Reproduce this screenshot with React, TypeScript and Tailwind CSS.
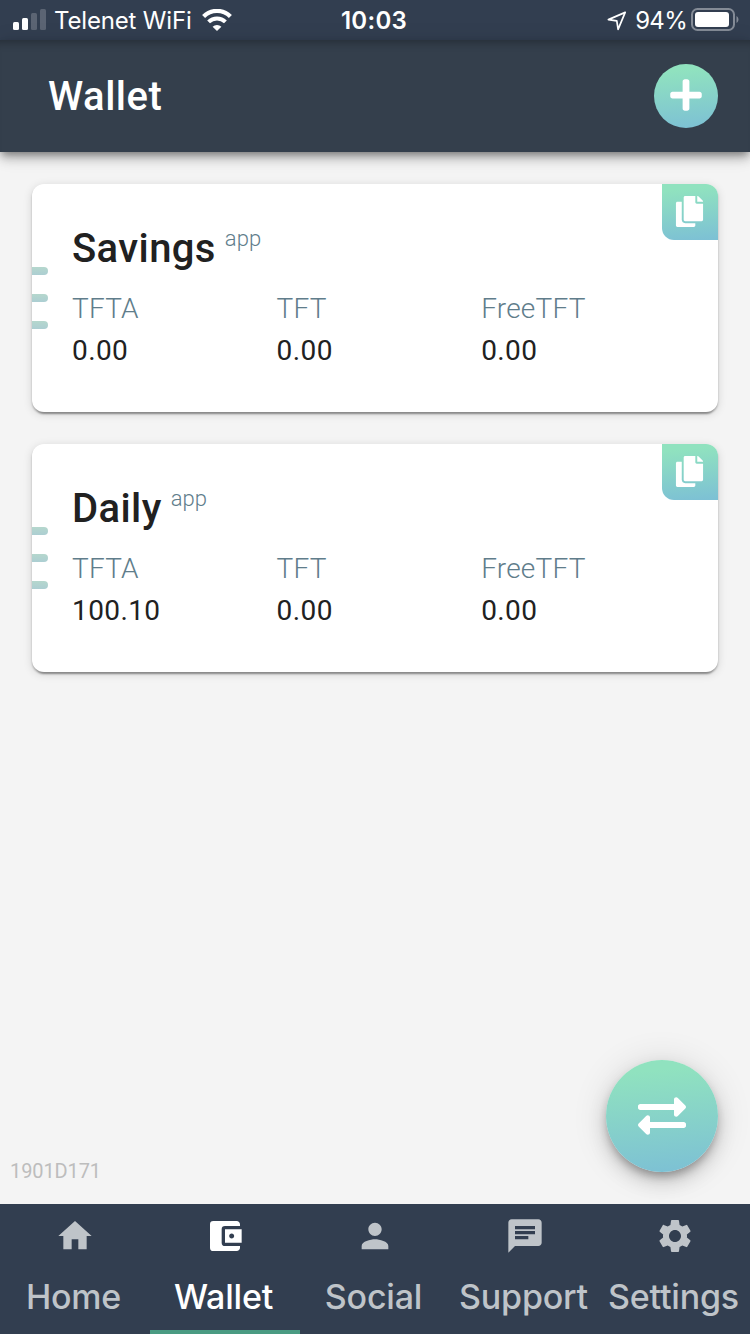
import { FaCopy, FaExchangeAlt, FaPlus } from "react-icons/fa";
import {
  MdAccountBalanceWallet,
  MdChat,
  MdHome,
  MdPerson,
  MdSettings,
} from "react-icons/md";
import type { IconType } from "react-icons";

const GRADIENT = "bg-[linear-gradient(175deg,#90e2bf_12%,#7dc1d4_97%)]";

type Wallet = {
  name: string;
  balances: { currency: string; amount: string }[];
};

const wallets: Wallet[] = [
  {
    name: "Savings",
    balances: [
      { currency: "TFTA", amount: "0.00" },
      { currency: "TFT", amount: "0.00" },
      { currency: "FreeTFT", amount: "0.00" },
    ],
  },
  {
    name: "Daily",
    balances: [
      { currency: "TFTA", amount: "100.10" },
      { currency: "TFT", amount: "0.00" },
      { currency: "FreeTFT", amount: "0.00" },
    ],
  },
];

const tabs: { label: string; icon: IconType; active?: boolean }[] = [
  { label: "Home", icon: MdHome },
  { label: "Wallet", icon: MdAccountBalanceWallet, active: true },
  { label: "Social", icon: MdPerson },
  { label: "Support", icon: MdChat },
  { label: "Settings", icon: MdSettings },
];

function StatusBar() {
  return (
    <div className="grid h-10 shrink-0 grid-cols-3 items-center bg-[#323e50] font-[Inter,sans-serif] text-white">
      <div className="flex h-10 items-center pl-[13px]">
        <svg width="33" height="21" viewBox="0 0 33 21" fill="white" className="mb-0.5 shrink-0">
          <rect x="0" y="13" width="6" height="8" rx="1.5" />
          <rect x="9" y="9" width="6" height="12" rx="1.5" />
          <rect x="18" y="4" width="6" height="17" rx="1.5" opacity="0.2" />
          <rect x="27" y="0" width="6" height="21" rx="1.5" opacity="0.2" />
        </svg>
        <span className="mt-0.5 ml-2 text-[24px] tracking-[-0.17px] whitespace-nowrap">Telenet WiFi</span>
        <svg width="30" height="22" viewBox="0 0 30 22" className="ml-[10px] shrink-0" fill="none" stroke="white">
          <path d="M1.6 7.4a19 19 0 0 1 26.8 0" strokeWidth="4.2" />
          <path d="M6.6 12.9a12 12 0 0 1 16.8 0" strokeWidth="4" />
          <path d="M15 22l-4.4-4.2a6.2 6.2 0 0 1 8.8 0z" fill="white" stroke="none" />
        </svg>
      </div>
      <div className="mt-0.5 mr-0.5 text-center text-[24px] font-semibold tracking-[0.3px]">10:03</div>
      <div className="flex h-10 items-center justify-end pr-[11px]">
        <svg width="20" height="20" viewBox="0 0 20 20" fill="none" stroke="white" strokeWidth="1.7" strokeLinejoin="round" className="mt-0.5">
          <path d="M18.2 1.4L1.4 8.6l8.4 1.3 1.3 8.4z" />
        </svg>
        <span className="mt-0.5 ml-2 text-[24px] tracking-[-0.7px]">94%</span>
        <svg width="48" height="24" viewBox="0 0 48 24" className="ml-1 shrink-0">
          <rect x="1" y="1" width="42" height="21" rx="5.5" fill="none" stroke="white" strokeOpacity="0.4" strokeWidth="2" />
          <rect x="4" y="4" width="34" height="15" rx="3" fill="white" />
          <path d="M45.5 8c2.6 1.6 2.6 5.4 0 7z" fill="white" fillOpacity="0.4" />
        </svg>
      </div>
    </div>
  );
}

function Header() {
  return (
    <header className="z-10 flex h-28 shrink-0 items-center justify-between bg-[#343f4c] pr-8 pl-12 shadow-[inset_0_10px_10px_-8px_rgba(0,0,0,0.3),0_4px_8px_-2px_rgba(0,0,0,0.4),0_8px_10px_rgba(0,0,0,0.14),0_2px_20px_rgba(0,0,0,0.12)]">
      <h1 className="mt-0.5 text-[40px] leading-none font-medium tracking-[0.5px] text-white">Wallet</h1>
      <button className={`${GRADIENT} flex size-16 items-center justify-center rounded-full pb-0.5 text-white`}>
        <FaPlus className="size-9" />
      </button>
    </header>
  );
}

function WalletCard({ wallet }: { wallet: Wallet }) {
  return (
    <section className="relative flex h-[228px] flex-col rounded-xl bg-white px-10 pt-[41px] shadow-[0_6px_2px_-4px_rgba(0,0,0,0.2),0_2px_2px_rgba(0,0,0,0.24),0_2px_10px_rgba(0,0,0,0.14)]">
      <div className="absolute top-[83px] left-0 flex flex-col gap-[19px]">
        {[0, 1, 2].map((i) => (
          <div key={i} className="h-2 w-4 rounded-r-full bg-linear-to-b from-[#b5d7cd] to-[#acced2]" />
        ))}
      </div>
      <button className={`${GRADIENT} absolute top-0 right-0 flex size-14 items-center justify-center rounded-tr-xl rounded-bl-xl pr-px text-white`}>
        <FaCopy className="mb-px size-[31px]" />
      </button>
      <h2 className="flex h-12 items-center text-[40px] font-medium tracking-[0.4px] text-[#212121]">
        {wallet.name}
        <span className="mb-[21px] ml-[9px] text-[22px] font-light tracking-[0.1px] text-[#607d8b]">app</span>
      </h2>
      <div className="mt-[15px] grid grid-cols-[204.6px_204.6px_1fr]">
        {wallet.balances.map((balance) => (
          <div key={balance.currency} className="flex flex-col text-[28px] leading-[42px]">
            <span className="font-light tracking-[0.2px] text-[#607d8b]">{balance.currency}</span>
            <span className="tracking-[0.4px] text-[#212121]">{balance.amount}</span>
          </div>
        ))}
      </div>
    </section>
  );
}

function TabBar() {
  return (
    <nav className="z-10 grid h-[130px] shrink-0 grid-cols-5 bg-[#323e50] font-[Inter,sans-serif]">
      {tabs.map(({ label, icon: Icon, active }) => (
        <a
          key={label}
          className={`flex flex-col items-center border-b-4 pt-3 ${
            active ? "border-[#4a9b82] text-white" : "border-transparent text-[#bfc4c9]"
          }`}
        >
          <Icon className="size-10 shrink-0" />
          <span className="mt-5 mr-[3px] text-[34px] leading-[42px] font-medium tracking-[-0.2px] whitespace-nowrap">{label}</span>
        </a>
      ))}
    </nav>
  );
}

export default function App() {
  return (
    <div className="flex h-[1334px] w-[750px] flex-col overflow-hidden bg-[#f4f4f4] font-[Roboto,sans-serif]">
      <StatusBar />
      <Header />
      <main className="flex flex-1 flex-col gap-8 px-8 pt-8 pb-8">
        {wallets.map((wallet) => (
          <WalletCard key={wallet.name} wallet={wallet} />
        ))}
        <div className="mt-auto flex items-end justify-between">
          <span className="-mb-[11px] -ml-[22px] text-[20px] leading-6 tracking-[-0.1px] text-[#bdbdbd]">1901D171</span>
          <button className={`${GRADIENT} flex size-28 items-center justify-center rounded-full text-white shadow-[0_6px_10px_-2px_rgba(0,0,0,0.3),0_10px_20px_rgba(0,0,0,0.14),0_2px_36px_rgba(0,0,0,0.12)]`}>
            <FaExchangeAlt className="size-12" />
          </button>
        </div>
      </main>
      <TabBar />
    </div>
  );
}
